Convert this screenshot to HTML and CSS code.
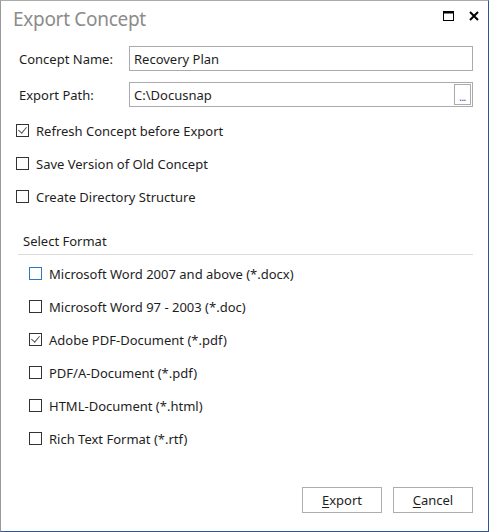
FILE: index.html
```html
<!DOCTYPE html>
<html>
<head>
<meta charset="utf-8">
<link rel="stylesheet" href="styles.css">
</head>
<body>
<div class="window">
  <div class="titlebar">
    <div class="title">Export Concept</div>
    <div class="controls">
      <svg class="max" width="11" height="10" viewBox="0 0 11 10"><rect x="0.5" y="0.5" width="10" height="9" fill="none" stroke="#000" stroke-width="1"/><rect x="0" y="0" width="11" height="2.5" fill="#000"/></svg>
      <svg class="close" width="10" height="10" viewBox="0 0 10 10"><path d="M1 1 L9 9 M9 1 L1 9" stroke="#000" stroke-width="2"/></svg>
    </div>
  </div>
  <div class="content">
    <div class="field">
      <label class="flabel">Concept Name:</label>
      <div class="input">Recovery Plan</div>
    </div>
    <div class="field">
      <label class="flabel">Export Path:</label>
      <div class="input path">C:\Docusnap<span class="browse">...</span></div>
    </div>
    <div class="options">
      <div class="check"><span class="box checked"></span>Refresh Concept before Export</div>
      <div class="check"><span class="box"></span>Save Version of Old Concept</div>
      <div class="check"><span class="box"></span>Create Directory Structure</div>
    </div>
    <div class="group">
      <div class="ghead">Select Format</div>
      <div class="formats">
        <div class="check"><span class="box focus"></span>Microsoft Word 2007 and above (*.docx)</div>
        <div class="check"><span class="box"></span>Microsoft Word 97 - 2003 (*.doc)</div>
        <div class="check"><span class="box checked"></span>Adobe PDF-Document (*.pdf)</div>
        <div class="check"><span class="box"></span>PDF/A-Document (*.pdf)</div>
        <div class="check"><span class="box"></span>HTML-Document (*.html)</div>
        <div class="check"><span class="box"></span>Rich Text Format (*.rtf)</div>
      </div>
    </div>
    <div class="buttons">
      <div class="btn"><u>E</u>xport</div>
      <div class="btn"><u>C</u>ancel</div>
    </div>
  </div>
</div>
</body>
</html>
```
FILE: styles.css
```css
* { box-sizing: border-box; }
html, body { margin: 0; padding: 0; background: #fff; }
body { font-family: "Noto Sans", "Open Sans", sans-serif; font-size: 13px; color: #1e1e1e; }
.window {
  width: 489px; height: 532px;
  border-top: 1px solid #aaaaaa;
  border-left: 1px solid #9a9a9a;
  border-right: 1px solid #2b579a;
  border-bottom: 1px solid #2b579a;
  display: flex; flex-direction: column;
}
.titlebar { display: flex; justify-content: space-between; align-items: flex-start; height: 38px; }
.title { font-size: 19px; color: #8c8c8c; padding: 5px 0 0 12px; letter-spacing: -0.3px; }
.controls { display: flex; gap: 15px; padding: 10px 9px 0 0; }
.content { padding: 7px 15px 18px 17px; display: flex; flex-direction: column; flex: 1; }
.field { display: flex; align-items: center; height: 25px; margin-bottom: 11px; }
.flabel { width: 111px; padding-left: 1px; }
.input { flex: 1; height: 25px; border: 1px solid #ababab; padding: 0 4px; display: flex; align-items: center; }
.path { position: relative; }
.browse { position: absolute; right: 1px; top: 1px; width: 17px; height: 21px; border: 1px solid #ababab; font-size: 10px; line-height: 24px; text-align: center; color: #3a3aa0; letter-spacing: -0.5px; }
.options { margin-top: -4px; margin-left: -2px; display: flex; flex-direction: column; }
.check { display: flex; align-items: center; height: 33px; }
.box { width: 13px; height: 13px; border: 1px solid #333; margin-right: 7px; flex: none; position: relative; }
.box.focus { border-color: #2f78c4; }
.box.checked::after { content: ""; position: absolute; left: 3px; top: 0px; width: 4px; height: 7px; border-right: 1.3px solid #555; border-bottom: 1.3px solid #555; transform: rotate(40deg); }
.group { margin-top: 19px; }
.ghead { padding-left: 5px; height: 23px; border-bottom: 1px solid #dcdcdc; }
.formats { padding-left: 11px; padding-top: 2px; display: flex; flex-direction: column; }
.buttons { margin-top: auto; display: flex; justify-content: flex-end; gap: 11px; }
.btn { width: 80px; height: 26px; border: 1px solid #adadad; display: flex; align-items: center; justify-content: center; }
.btn u { text-decoration: underline; text-underline-offset: 2px; }
```
